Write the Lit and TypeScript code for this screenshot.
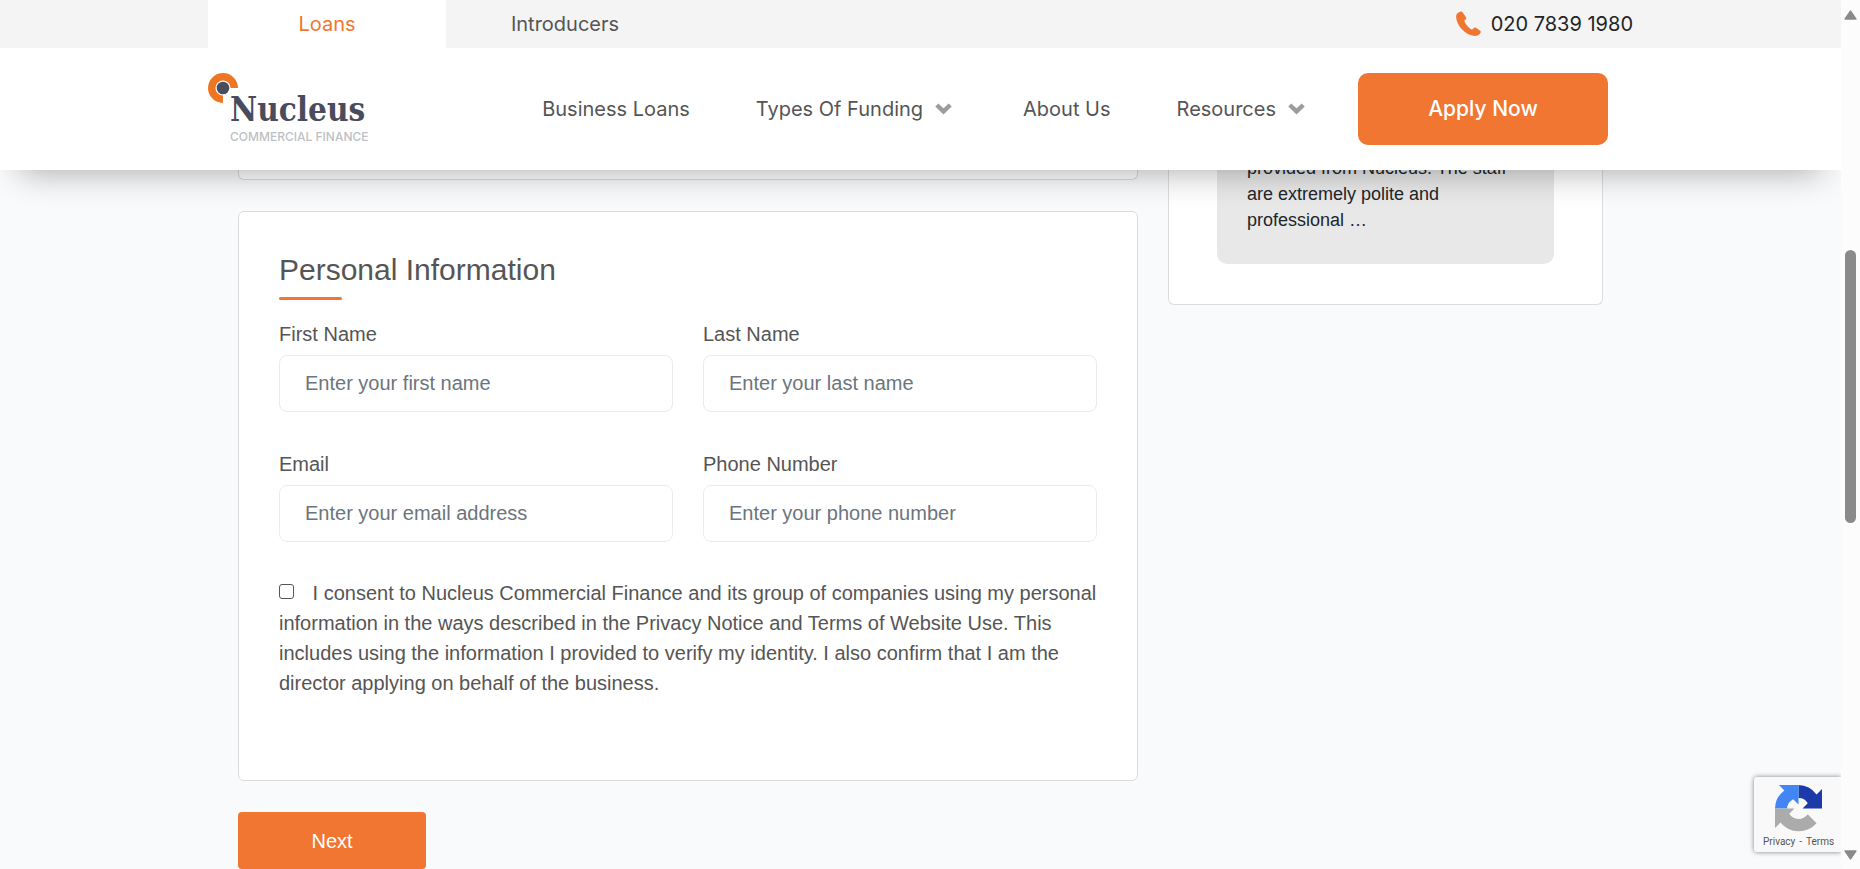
import { LitElement, html, css, svg } from "lit";
import { customElement } from "lit/decorators.js";
import { classMap } from "lit/directives/class-map.js";

@customElement("site-header")
class SiteHeader extends LitElement {
  static styles = css`
    :host { display: block; position: relative; z-index: 2; background: #fff;
      box-shadow: 0 22px 32px -20px rgba(0, 0, 0, 0.32);
      font-family: Inter, "Open Sans", sans-serif; color: #555; }
    a { color: inherit; text-decoration: none; }
    .top { background: #f4f4f4; }
    .wrap { max-width: 1425px; margin: 0 auto; display: flex; align-items: center; }
    .tab { width: 238px; line-height: 48px; font-size: 20px; text-align: center; }
    .tab.active { background: #fff; color: #f07632; }
    .phone { margin-left: auto; display: flex; align-items: center; gap: 10px; color: #212529; font-size: 20px; }
    .bar { min-height: 122px; }
    .logo { display: grid; grid-template-columns: 22px auto; }
    .logo svg { grid-area: 1 / 1 / 2 / 3; }
    .words { grid-area: 1 / 2; padding-top: 18px; display: flex; flex-direction: column; }
    .name { font: bold 33px/38px "DejaVu Serif Condensed", "DejaVu Serif", serif; color: #484c5c; }
    .sub { font-size: 12px; line-height: 16px; font-weight: 500; color: #bdbfc3; white-space: nowrap; }
    nav { margin-left: auto; display: flex; align-items: center; gap: 66px; font-size: 20px; white-space: nowrap; }
    .link { display: flex; align-items: center; gap: 12px; }
    .link svg { margin-right: 5px; }
    .apply { margin: 0 25px 0 48px; width: 250px; height: 72px; border: 0; border-radius: 10px;
      background: #f07632; color: #fff; font: 500 21px/24px Inter, "Open Sans", sans-serif; }
  `;
  render() {
    const chevron = svg`<svg width="17" height="12" viewBox="0 0 17 12" aria-hidden="true"><path d="M1.800 2l6.700 6.400L15.200 2" fill="none" stroke="#9c9c9c" stroke-width="4.400"/></svg>`;
    const links = [["Business Loans", false], ["Types Of Funding", true], ["About Us", false], ["Resources", true]] as const;
    return html`
      <div class="top"><div class="wrap">
        <a class="tab active" href="#loans">Loans</a>
        <a class="tab" href="#introducers">Introducers</a>
        <a class="phone" href="tel:02078391980">
          <svg width="25" height="26" viewBox="0 0 25 26" aria-hidden="true"><path fill="#f07632" d="M4.200.8C1.700 1.500 0 3.300.1 6c.4 8.800 9.500 18.300 18.600 18.900 2.600.1 4.900-1.100 6-3.400.3-.7.1-1.200-.5-1.700l-4.300-3.100c-.6-.4-1.200-.3-1.600.1l-1.700 1.500c-.7.5-1.300.3-2-.2-2.400-1.800-4.500-4.300-5.900-7-.4-.8-.4-1.400.2-2l1-1c.5-.5.6-1 .3-1.600L6.700 1.500C6.200.6 5.200.4 4.200.8z"/></svg>
          020 7839 1980</a>
      </div></div>
      <div class="wrap bar">
        <a class="logo" href="#home">
          <svg width="30" height="30" viewBox="0 0 30 30" aria-hidden="true">
            <path d="M15 26.300A11.300 11.300 0 1 1 26.300 15" fill="none" stroke="#ee7623" stroke-width="7.400"/>
            <circle cx="15" cy="15" r="6.300" fill="#484c5c"/></svg>
          <span class="words"><span class="name">Nucleus</span><span class="sub">COMMERCIAL FINANCE</span></span>
        </a>
        <nav>${links.map(([t, more]) => html`<a class="link" href="#">${t}${more ? chevron : ""}</a>`)}</nav>
        <button class="apply">Apply Now</button>
      </div>`;
  }
}

@customElement("personal-form")
class PersonalForm extends LitElement {
  static styles = css`
    :host { display: block; }
    form { display: block; }
    .card { box-sizing: border-box; background: #fff; border: 1px solid #dadcde; border-radius: 6px; padding: 40px 40px 82px; }
    h2 { margin: 0; font-size: 30px; line-height: 36px; font-weight: 400; }
    h2::after { content: ""; display: block; width: 63px; height: 3px; margin-top: 9px; border-radius: 2px; background: #f07632; }
    .fields { display: grid; grid-template-columns: 1fr 1fr; gap: 37px 30px; margin: 19px 0 36px; }
    .field { display: flex; flex-direction: column; gap: 6px; }
    .field label { line-height: 30px; }
    .field input { box-sizing: border-box; width: 100%; height: 57px; padding: 0 25px; border: 1px solid #e9ecef;
      border-radius: 8px; background: #fff; font: inherit; color: #555; }
    .field input::placeholder { color: #6c757d; opacity: 1; }
    .consent { margin: 0; line-height: 30px; }
    .consent input { appearance: none; box-sizing: border-box; width: 15px; height: 15px; margin: 0 13px 0 0; border: 1px solid #555;
      border-radius: 3px; background: #fff; vertical-align: 1px; }
    .consent input:checked { background: #f07632; }
    .next { display: block; margin-top: 31px; width: 188px; height: 57px; border: 0; border-radius: 4px; background: #f07632;
      color: #fff; font: inherit; }
  `;
  render() {
    const fields = [
      ["first", "First Name", "text", "Enter your first name"],
      ["last", "Last Name", "text", "Enter your last name"],
      ["email", "Email", "email", "Enter your email address"],
      ["phone", "Phone Number", "tel", "Enter your phone number"],
    ];
    return html`<form>
      <div class="card">
        <h2>Personal Information</h2>
        <div class="fields">${fields.map(([id, label, type, hint]) => html`
          <div class="field"><label for=${id}>${label}</label><input id=${id} type=${type} placeholder=${hint}></div>`)}
        </div>
        <p class="consent"><input id="consent" type="checkbox"> <label for="consent">I consent to Nucleus Commercial Finance and its group of companies using my personal information in the ways described in the Privacy Notice and Terms of Website Use. This includes using the information I provided to verify my identity. I also confirm that I am the director applying on behalf of the business.</label></p>
      </div>
      <button class="next" type="button">Next</button>
    </form>`;
  }
}

@customElement("scroll-rail")
class ScrollRail extends LitElement {
  static styles = css`
    :host { box-sizing: border-box; width: 19px; padding: 10px 0 9px; background: #fcfcfc; display: flex; flex-direction: column; align-items: center; }
    .before { flex: 230; }
    .thumb { flex: 273; width: 11px; border-radius: 6px; background: #8a8a8a; }
    .after { flex: 327; }
    .down { transform: rotate(180deg); }
  `;
  render() {
    const arrow = (down: boolean) => html`<svg class=${classMap({ down })} width="13" height="10" viewBox="0 0 13 10" aria-hidden="true"><path d="M6.500 1.200L11.800 9H1.200z" fill="#8a8a8a" stroke="#8a8a8a" stroke-width="1.600" stroke-linejoin="round"/></svg>`;
    return html`${arrow(false)}<div class="before"></div><div class="thumb"></div><div class="after"></div>${arrow(true)}`;
  }
}

@customElement("captcha-badge")
class CaptchaBadge extends LitElement {
  static styles = css`
    :host { box-sizing: border-box; width: 87px; padding: 8px 0 4px 9px; background: #f9f9f9; border-radius: 3px 0 0 3px;
      box-shadow: 0 0 5px #808080; font: 10px/12px Roboto, sans-serif; color: #555; clip-path: inset(-8px 0 -8px -8px); }
    svg { display: block; margin: 0 0 4px 12px; }
    a { color: inherit; text-decoration: none; }
    .links { display: flex; gap: 4px; white-space: nowrap; }
  `;
  render() {
    return html`<svg width="47" height="47" viewBox="0 0 64 64" aria-hidden="true">
        <path fill="#1c3aa9" d="M64 32V5.400l-7.400 7.400A32 32 0 0 0 32 0v17.600a14 14 0 0 1 12.600 7.200L37.500 32z"/>
        <path fill="#4285f4" d="M32 0H5.400l7.400 7.400A32 32 0 0 0 0 32h16.500a15 15 0 0 1 8.300-12.600L32 26.500z"/>
        <path fill="#ababab" d="M0 32v26.600l7.400-7.400A32 32 0 0 0 56.600 52L44.500 39.900A15 15 0 0 1 19.400 39.200L26.500 32z"/>
      </svg>
      <div class="links"><a href="#privacy">Privacy</a><span>-</span><a href="#terms">Terms</a></div>`;
  }
}

@customElement("app-root")
class AppRoot extends LitElement {
  static styles = css`
    :host { display: flex; height: 100vh; overflow: hidden; background: #f9fafc; color: #555;
      font: 20px/30px "Liberation Sans", Arial, sans-serif; }
    .page { position: relative; flex: 1; min-width: 0; overflow: hidden; }
    /* the content is scrolled a little way beneath the fixed header */
    main { max-width: 1365px; margin: -15px auto 0; padding: 0 30px; display: grid; grid-template-columns: 900fr 435fr;
      gap: 30px; align-items: start; }
    .previous { box-sizing: border-box; height: 25px; margin-bottom: 31px; background: #fff; border: 1px solid #dadcde; border-top: 0; border-radius: 0 0 6px 6px; }
    .side { background: #fff; border: 1px solid #dadcde; border-top: 0; border-radius: 0 0 6px 6px; padding: 0 48px 40px; }
    .quote { margin: 0; padding: 0 30px 31px; background: #e8e8e8; border-radius: 0 0 10px 10px; color: #212529; font-size: 18px; line-height: 26px; }
    captcha-badge { position: absolute; right: 0; bottom: 17px; }
  `;
  render() {
    return html`
      <div class="page">
        <site-header></site-header>
        <main>
          <div><div class="previous"></div><personal-form></personal-form></div>
          <aside class="side"><blockquote class="quote">provided from Nucleus. The staff are extremely polite and professional …</blockquote></aside>
        </main>
        <captcha-badge></captcha-badge>
      </div>
      <scroll-rail></scroll-rail>`;
  }
}
